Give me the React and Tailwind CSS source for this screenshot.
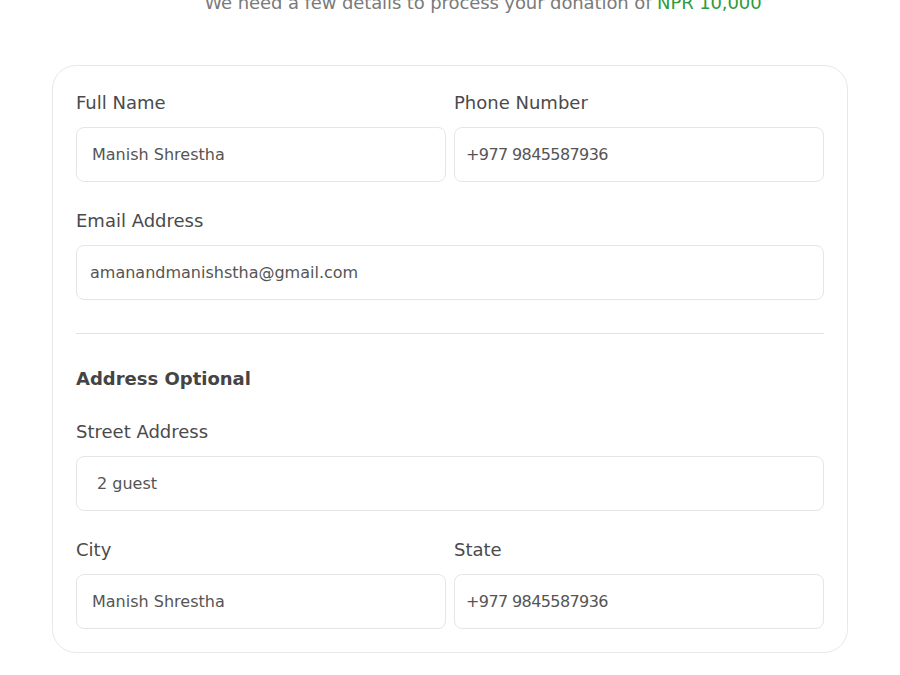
export default function App() {
  const font = { fontFamily: '"DejaVu Sans", sans-serif' };

  const Field = ({ label, value, pad = "pl-[15px]", tight = false }) => (
    <div className="flex flex-col">
      <label className="text-[18px] leading-[27px] font-medium text-[#4a4a4a] mb-[11px]">{label}</label>
      <div
        className={`h-[55px] rounded-[8px] border border-[#e6e6e6] bg-white flex items-center ${pad} text-[16px] text-[#555555] ${
          tight ? "tracking-[-0.6px]" : ""
        }`}
      >
        {value}
      </div>
    </div>
  );

  return (
    <div className="min-h-[675px] bg-white overflow-hidden" style={font}>
      <div className="mt-[-11px] flex justify-center pl-[66px] text-[18px] leading-[27px] tracking-[-0.1px] text-[#7a7a7a]">
        <p>
          We need a few details to process your donation of{" "}
          <span className="text-[#2e9b3e]">NPR 10,000</span>
        </p>
      </div>

      <div className="mx-[52px] mt-[49px] rounded-[24px] border border-[#e8e8e8] px-[23px] pt-[23px] pb-[23px]">
        <div className="grid grid-cols-2 gap-x-[8px]">
          <Field label="Full Name" value="Manish Shrestha" />
          <Field label="Phone Number" value="+977 9845587936" pad="pl-[11px]" tight />
        </div>

        <div className="mt-[25px]">
          <Field label="Email Address" value="amanandmanishstha@gmail.com" pad="pl-[13px]" />
        </div>

        <div className="mt-[33px] h-[1px] bg-[#e2e2e2]" />

        <h2 className="mt-[30px] text-[18px] leading-[30px] font-bold text-[#444444]">Address Optional</h2>

        <div className="mt-[24px]">
          <Field label="Street Address" value="2 guest" pad="pl-[20px]" />
        </div>

        <div className="mt-[25px] grid grid-cols-2 gap-x-[8px]">
          <Field label="City" value="Manish Shrestha" />
          <Field label="State" value="+977 9845587936" pad="pl-[11px]" tight />
        </div>
      </div>
    </div>
  );
}
